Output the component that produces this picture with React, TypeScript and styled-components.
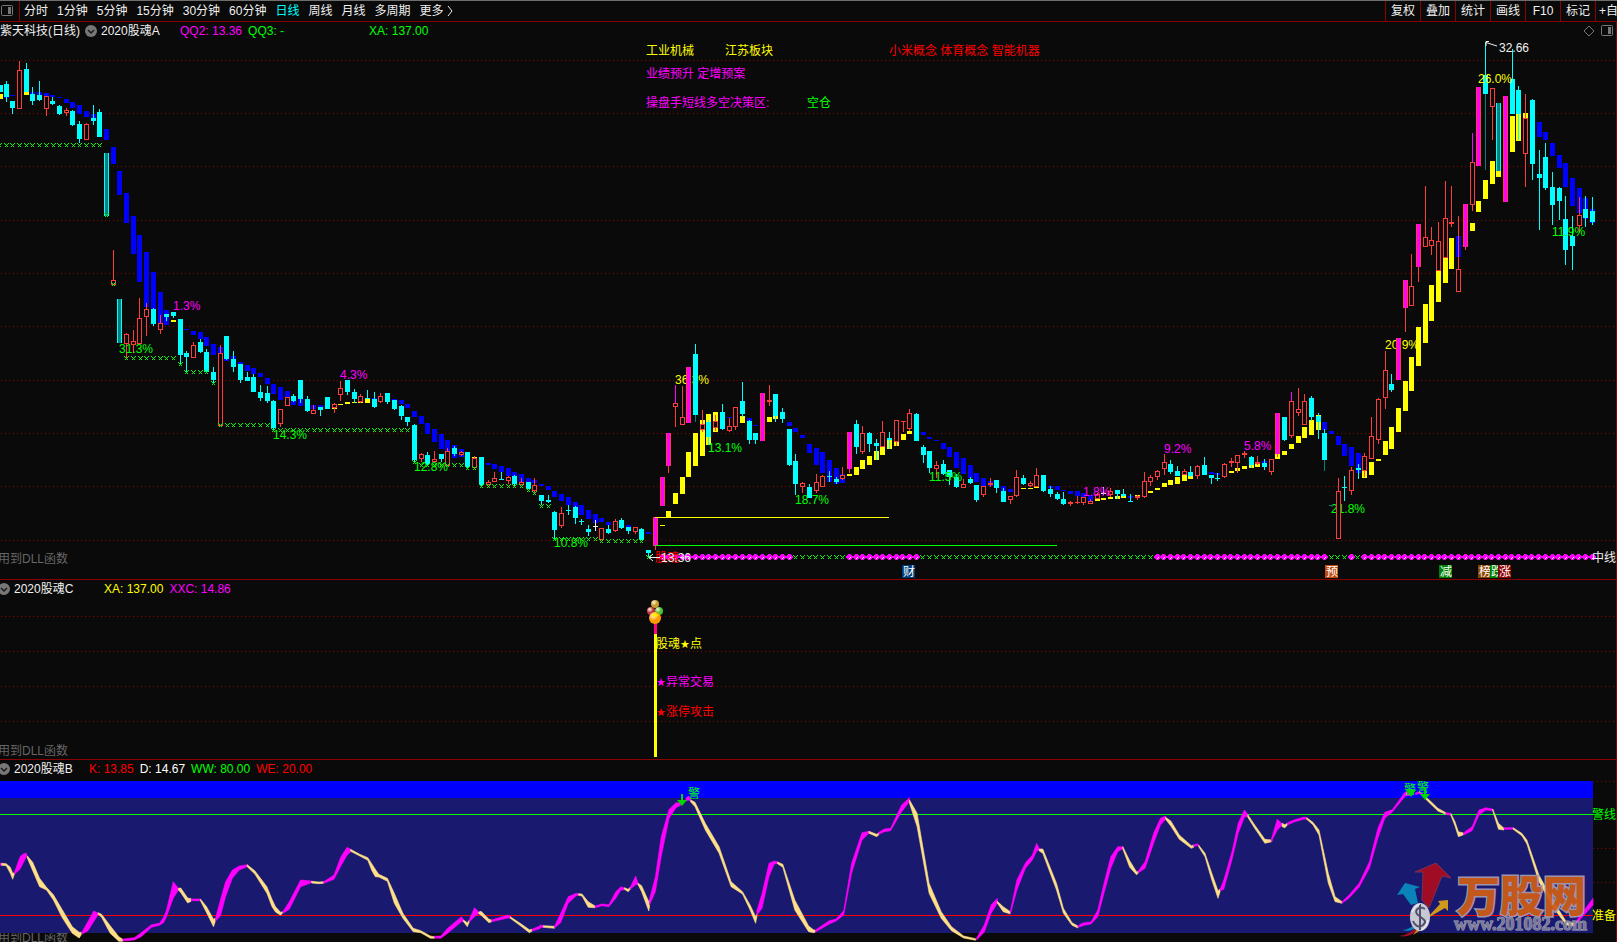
import React from "react";
import styled, { createGlobalStyle } from "styled-components";

const BG = "#0a0a0a";
const LINE = "#8b0000";
const RED = "#ff3c3c";
const CYAN = "#00ffff";
const TEAL = "#008080";
const MAGENTA = "#ff00ff";
const YELLOW = "#ffff00";
const GREEN = "#00ff00";
const BLUE = "#0000ff";
const WHITE = "#f0f0f0";
const FONT = '"Liberation Sans", "Noto Sans CJK SC", sans-serif';

const GlobalStyle = createGlobalStyle`
  * { box-sizing: border-box; }
  html { background: ${BG}; }
  body { margin: 0; background: ${BG}; overflow-x: hidden; font: 12px/18px ${FONT}; color: ${WHITE}; }
`;

const Toolbar = styled.nav`
  display: flex;
  justify-content: space-between;
  height: 22px;
  border-top: 1px solid #6e6e6e;
  border-bottom: 1px solid ${LINE};
  overflow: hidden;
  white-space: nowrap;
`;

const Periods = styled.div`
  display: flex;
  align-items: center;
  gap: 9px;
`;

const LayoutButton = styled.button`
  display: flex;
  align-items: center;
  width: 20px;
  height: 20px;
  margin: 0 -5px 0 0;
  padding: 0 0 0 1px;
  border: 0;
  border-right: 1px solid ${LINE};
  background: none;
`;

const PeriodButton = styled.button<{ $active?: boolean }>`
  display: flex;
  align-items: center;
  gap: 2px;
  padding: 0;
  border: 0;
  background: none;
  font: 12px/18px ${FONT};
  color: ${(p) => (p.$active ? CYAN : WHITE)};
`;

const Tools = styled.div`
  display: flex;
`;

const ToolButton = styled.button<{ $cut?: boolean }>`
  width: ${(p) => (p.$cut ? 22 : 35)}px;
  padding: 0 0 0 ${(p) => (p.$cut ? 3 : 0)}px;
  overflow: hidden;
  border: 0;
  border-left: 1px solid ${LINE};
  background: none;
  font: 12px/18px ${FONT};
  color: ${WHITE};
  text-align: ${(p) => (p.$cut ? "left" : "center")};
`;

const Panels = styled.main`
  box-shadow: inset -1px 0 0 ${LINE};
`;

const Panel = styled.section<{ $last?: boolean }>`
  border-bottom: ${(p) => (p.$last ? "0" : `1px solid ${LINE}`)};
`;

const PanelHeader = styled.header`
  display: flex;
  align-items: center;
  height: 18px;
  overflow: hidden;
  white-space: nowrap;
`;

const Title = styled.h2<{ $width?: number }>`
  min-width: ${(p) => p.$width ?? 0}px;
  margin: 0;
  font: inherit;
`;

const CollapseButton = styled.button`
  display: flex;
  margin: 0 4px 0 -2px;
  padding: 0;
  border: 0;
  background: none;
`;

const StockCollapse = styled(CollapseButton)`
  margin: 0 4px 0 5px;
`;

const Value = styled.span<{ $color: string; $gap?: number }>`
  margin-right: ${(p) => p.$gap ?? 6}px;
  color: ${(p) => p.$color};
`;

const HeaderIcons = styled.div`
  display: flex;
  align-items: center;
  gap: 6px;
  margin: 0 4px 0 auto;
`;

const Chart = styled.svg`
  display: block;
  width: 100%;
  height: auto;
  font: 12px ${FONT};
`;

/* Series are kept in thirds of a pixel, each block counted from its own origin. */
type Block = { ox: number; oy: number; candles: string; bands: string };

/* candles: x kind high top bottom low
   kinds: c falling, r rising, m limit-up, t limit-down, w flat,
          p rising with magenta upper wick, d falling with dark lower wick */
const BLOCKS: Block[] = [
  {
    ox: 0, oy: 0,
    candles: `0 c 255 255 276 276;19 c 243 252 291 306;37 c 303 303 324 342;58 r 183 210 327 327;79 c 189 207 276 276;97 c 261 282 303 315;118 c 243 285 300 303;139 r 288 288 327 348;157 c 291 303 312 315;178 c 315 318 342 345;199 r 324 330 339 348;217 c 330 333 375 378;238 c 363 372 417 429;259 r 369 372 420 420;280 c 315 354 363 375;298 c 327 336 411 411;319 t 459 459 648 648;340 r 750 840 855 855`,
    bands: `0 y 282 297;19 b 291 294;37 b 285 288;79 y 276 285;97 b 276 282;118 b 276 285;139 b 279 288;157 b 285 291;178 b 291 294;199 b 297 309;217 b 306 324;238 b 315 342;259 b 333 351;280 b 342 354;319 b 387 420;340 b 441 492;358 b 513 585;379 b 579 669;400 b 648 762;418 b 705 846;439 b 756 921;460 b 816 930;481 b 876 970`,
  },
  {
    ox: 0, oy: 280,
    candles: `358 t 57 57 189 189;379 r 159 162 192 234;400 r 150 183 195 219;418 r 54 114 192 192;439 r 69 87 111 168;460 c 84 87 132 138;481 r 105 129 150 162;499 c 102 102 111 123;520 c 96 96 108 114;541 c 117 117 225 252;559 c 213 219 231 276;580 r 186 195 234 234;601 c 177 186 216 219;619 c 207 216 276 279;640 c 261 276 300 309;661 r 195 219 438 438;679 c 168 168 237 240;700 c 213 237 261 276;721 c 252 252 300 309;742 c 276 291 303 303;760 c 282 291 336 336;781 c 315 336 354 363;802 c 318 339 363 369;820 c 360 363 444 450;841 r 387 387 432 441;862 r 351 351 378 378;880 c 342 348 363 366;901 c 300 300 357 369;922 c 348 357 393 396;940 r 375 390 402 402;961 c 381 381 390 408;982 c 351 351 387 387;1003 r 369 372 384 399;1021 r 303 324 345 363;1042 c 300 300 336 345;1063 c 327 336 357 369;1081 r 342 348 366 369;1102 c 330 354 357 357;1123 c 336 357 381 384;1141 r 339 348 366 369;1162 c 339 339 366 372;1183 c 360 360 387 390;1204 c 375 378 408 420;1222 c 411 411 426 438;1243 c 432 435 540 546`,
    bands: `499 b 90 135;520 y 120 126;559 b 147 150;580 b 153 165;601 b 156 177;619 b 171 198;640 b 192 225;661 b 201 219;679 b 237 243;700 b 228 237;721 b 246 252;742 b 255 273;760 b 264 282;781 b 279 291;802 b 294 312;820 b 312 342;841 b 321 360;862 b 333 351;880 b 363 375;901 b 357 378;940 b 375 387;961 b 375 381;1003 y 384 387;1021 y 372 375;1042 y 366 372;1063 y 366 369;1081 y 366 369;1102 y 357 369;1123 b 354 357;1183 b 357 360;1204 b 360 372;1222 b 372 384;1243 b 393 411`,
  },
  {
    ox: 330, oy: 340,
    candles: `274 r 339 342 357 366;292 c 336 345 372 378;313 r 333 357 366 366;334 c 342 342 357 366;352 r 324 333 378 378;373 c 318 324 342 348;394 r 333 336 345 348;412 c 336 336 381 384;433 r 348 354 384 384;454 c 351 351 435 438;475 r 420 426 435 435;493 r 396 414 426 426;514 c 396 417 420 420;535 r 408 411 423 432;553 c 405 408 432 438;574 r 414 426 435 435;595 c 426 426 447 447;613 r 414 435 453 459;634 c 465 465 483 495;655 c 465 480 486 489;673 c 513 516 570 597;694 r 501 519 558 564;715 c 495 510 513 525;736 c 498 501 534 552;754 c 537 543 546 555;775 c 555 567 576 588;796 w 540 558 561 573;814 r 564 564 600 600;835 c 555 567 579 582;856 r 537 543 573 576;874 c 534 540 564 567;895 c 561 561 573 582;916 r 561 561 576 582;934 c 564 567 600 600;955 c 630 630 639 651;976 m 531 531 618 630`,
    bands: `274 b 228 252;292 b 249 282;313 b 267 306;334 b 282 327;352 b 300 333;373 b 315 354;394 b 327 351;433 y 351 354;475 b 369 375;493 b 372 387;514 b 378 396;535 b 384 408;553 b 396 408;574 b 402 426;595 b 414 426;613 b 420 429;634 b 432 438;655 b 438 450;673 b 453 471;694 b 462 483;715 b 471 495;736 b 486 501;754 b 495 525;775 b 510 537;796 b 522 549;814 b 534 546;835 b 546 555;895 b 555 561;955 b 576 582;997 y 555 558;1015 y 513 531;1036 y 459 492;1057 y 411 462;1075 y 336 411;1096 y 279 378;1117 y 240 348;1135 y 222 315;1156 y 216 276`,
  },
  {
    ox: 620, oy: 320,
    candles: `127 m 471 471 558 558;145 m 339 339 438 459;166 p 195 249 261 321;187 r 198 291 315 315;205 m 141 141 309 309;226 d 72 102 285 305;247 r 270 312 330 336;265 c 300 306 351 375;286 r 285 303 324 333;307 c 252 276 327 330;328 r 294 318 333 336;346 r 261 261 321 330;367 c 186 243 282 291;388 c 300 303 360 372;406 c 339 339 360 372;427 m 219 219 363 363;448 r 195 240 246 258;466 c 222 222 288 306;487 c 264 276 297 309;508 c 327 327 435 438;526 c 402 423 492 525;547 r 486 489 501 519;568 c 492 501 534 534;589 r 462 486 513 519;607 r 465 468 501 501;628 c 453 468 471 486;649 c 471 477 486 492;667 r 441 465 477 480;688 m 336 336 447 459;709 c 300 312 381 402;727 r 318 339 396 402;748 c 336 339 372 396;769 c 357 369 378 420;787 r 303 336 381 381;808 c 336 354 360 387;829 r 300 300 366 378;850 r 303 303 306 336;868 r 267 279 327 333;889 c 279 282 363 363;910 c 375 381 405 429;928 c 393 393 444 459;949 r 423 435 447 474;970 c 420 432 462 465;988 c 450 450 471 495;1009 c 462 471 501 504;1030 r 477 492 504 504;1051 c 471 477 489 492;1069 c 495 495 540 546;1090 r 498 498 525 531;1111 r 474 489 495 501;1129 c 480 480 504 519;1150 c 504 513 546 546`,
    bands: `328 b 291 294;367 y 288 309;388 b 294 303;406 b 315 318;448 y 291 306;466 y 288 297;508 b 306 318;526 b 324 336;547 b 345 354;568 b 372 399;589 b 384 435;607 b 396 459;628 b 420 486;649 b 444 492;667 b 462 489;688 y 462 468;709 y 441 465;727 y 420 447;748 y 408 435;769 y 393 420;787 y 381 405;808 y 360 387;829 y 366 378;850 y 342 360;868 y 333 342;910 b 336 345;928 b 351 357;949 b 360 363;970 b 369 387;988 b 381 411;1009 b 396 444;1030 b 414 462;1051 b 435 474;1069 b 459 486;1090 b 474 498;1111 b 483 498;1150 b 498 513`,
  },
  {
    ox: 1000, oy: 320,
    candles: `31 r 528 528 540 552;49 r 450 471 528 531;70 c 465 474 492 495;91 r 483 489 498 501;109 r 444 465 501 501;130 c 465 465 513 516;151 c 498 507 522 531;172 c 516 522 537 540;190 c 516 537 552 555;211 r 543 546 552 558;232 r 528 546 549 552;250 r 531 531 549 555;271 r 537 543 552 552;292 r 519 522 537 537;310 w 501 519 522 525;331 r 504 513 525 531;352 c 510 510 522 537;370 c 507 522 528 531;391 c 522 543 546 546;412 r 525 528 534 540;433 r 456 483 531 534;451 r 465 471 486 498;472 r 450 453 471 480;493 r 402 426 447 465;511 c 420 432 456 462;532 c 438 453 468 468;553 r 447 453 465 465;571 c 438 456 468 471;592 r 435 438 468 477;613 c 411 435 465 465;634 c 465 465 474 492;652 c 459 474 477 483;673 r 429 432 471 474;694 r 414 423 429 441;712 r 405 405 429 459;733 r 393 399 405 414;754 c 408 411 435 444;772 r 408 426 432 435;793 c 417 429 441 450;814 r 417 417 456 465;832 m 279 279 402 411;853 c 291 291 360 363;874 p 216 243 348 354;895 r 204 267 279 288;913 r 222 243 315 315;934 c 228 234 291 303;955 c 279 288 306 357;973 d 327 339 420 453;1015 r 474 513 657 657;1033 c 468 501 504 543;1054 r 441 450 513 525;1075 c 432 444 450 477;1093 r 399 408 453 471;1114 r 291 348 417 417;1135 r 234 237 360 372;1156 r 93 150 234 267;1174 c 162 192 210 216;1195 m 54 54 180 180`,
    bands: `31 b 507 516;70 y 504 507;91 y 504 507;109 y 501 504;151 b 498 504;172 b 498 510;190 b 510 513;211 b 513 522;232 b 513 528;250 b 519 531;271 b 525 543;292 y 537 543;310 y 534 540;331 y 531 537;352 y 528 537;370 y 525 534;391 b 528 534;412 y 525 528;451 y 513 519;472 y 504 510;493 y 489 501;511 y 480 495;532 y 471 492;553 y 465 483;571 y 459 477;634 b 456 462;652 b 459 465;694 y 453 459;712 y 444 453;733 y 438 447;754 y 435 444;772 y 429 441;793 b 423 429;832 y 402 417;853 y 393 405;874 y 372 387;895 y 348 369;913 y 321 354;934 y 300 345;955 y 285 330;973 b 306 330;994 b 333 342;1015 b 348 375;1033 b 372 408;1054 b 381 438;1075 b 399 459;1093 y 453 474;1114 y 426 465;1135 y 417 423;1156 y 363 405;1174 y 321 387;1195 y 264 336;1216 y 183 273;1234 y 111 213`,
  },
  {
    ox: 1260, oy: 0,
    candles: `436 m 840 840 924 996;454 r 762 858 918 918;475 m 672 672 801 846;496 r 558 711 741 741;514 r 681 720 738 765;535 r 666 723 813 813;556 r 543 654 774 774;574 r 558 666 672 681;595 r 648 807 876 876;616 m 612 612 741 750;637 p 399 486 615 633;655 m 261 261 498 498;676 d 126 225 282 510;697 r 264 264 321 420;715 t 309 309 513 513;736 m 288 288 606 606;757 c 147 237 342 342;775 c 258 270 342 420;796 r 282 354 462 561;817 c 297 300 492 540;838 c 450 522 534 690;856 c 429 471 564 570;877 c 516 561 615 675;898 c 561 564 603 660;916 c 588 657 750 795;937 c 648 708 738 810;958 r 591 645 678 696;976 c 588 627 654 681;997 c 591 633 666 675`,
    bands: `475 y 981 1098;496 y 912 1029;514 y 855 963;535 y 813 906;556 y 774 849;574 y 714 807;595 b 708 771;637 y 669 693;655 y 603 636;676 y 540 597;697 y 483 552;715 y 510 531;757 y 348 456;775 y 342 423;796 y 339 354;838 b 366 411;856 b 396 420;877 b 429 468;898 b 465 504;916 b 489 561;937 b 534 618;958 b 564 639;976 b 594 657;997 b 627 669`,
  },
];

/* Trading-day column number to pixel column. */
const slot = (i: number) => Math.round(-1 + i * 6.692);
const range = (a: number, b: number) => Array.from({ length: b - a + 1 }, (_, k) => a + k);

/* Support marks: first column, last column, height */
const SUPPORT: [number, number, number][] = [
  [0, 15, 145], [16, 16, 215], [17, 17, 284], [19, 26, 358], [27, 27, 364], [28, 31, 372], [32, 32, 383],
  [33, 40, 425], [41, 61, 430], [62, 62, 462], [63, 69, 465], [70, 71, 468], [72, 78, 486], [79, 79, 490],
  [80, 80, 493], [81, 82, 506], [83, 89, 539], [90, 96, 541], [97, 97, 557],
  [119, 126, 557], [138, 172, 557], [199, 201, 557], [203, 203, 557],
];
const TREND: [number, number][] = [[99, 118], [127, 137], [173, 198], [202, 202], [204, 238]];

const LABELS_UNDER: [string, number, number, string][] = [
  ["36.3%", 675, 384, YELLOW], ["20.9%", 1385, 349, YELLOW], ["21.8%", 1331, 513, GREEN],
];
const LABELS_OVER: [string, number, number, string][] = [
  ["1.3%", 173, 310, MAGENTA], ["31.3%", 119, 353, GREEN], ["14.3%", 273, 439, GREEN], ["4.3%", 340, 379, MAGENTA],
  ["12.8%", 414, 471, GREEN], ["10.8%", 554, 547, GREEN], ["13.1%", 708, 452, GREEN], ["18.7%", 795, 504, GREEN],
  ["11.5%", 929, 481, GREEN], ["1.8%", 1083, 496, MAGENTA], ["9.2%", 1164, 453, MAGENTA], ["5.8%", 1244, 450, MAGENTA],
  ["26.0%", 1478, 83, YELLOW], ["11.9%", 1552, 236, GREEN], ["32.66", 1499, 52, WHITE],
  ["工业机械", 646, 55, YELLOW], ["江苏板块", 725, 55, YELLOW], ["小米概念 体育概念 智能机器", 889, 55, "#ff0000"],
  ["业绩预升 定增预案", 646, 78, MAGENTA], ["操盘手短线多空决策区:", 646, 107, MAGENTA], ["空仓", 807, 107, GREEN],
  ["股魂", 655, 562, "#ff0000"], ["13.36", 661, 562, WHITE], ["中线", 1592, 562, WHITE],
];

const TAGS: [string, number, string][] = [
  ["财", 902, "#003c78"], ["预", 1325, "#c04a10"], ["减", 1439, "#008000"], ["榜", 1478, "#8b4500"], ["跌", 1490, "#008000"], ["涨", 1498, "#8b0000"],
];

const COLORS: Record<string, string> = { y: YELLOW, b: BLUE };

function Grid({ rows, from = 1 }: { rows: number[]; from?: number }) {
  return (
    <g stroke="#8b0000" strokeDasharray="1 3" shapeRendering="crispEdges">
      {rows.map((y) => <line key={y} x1={from} x2="1616" y1={y + 0.5} y2={y + 0.5} />)}
    </g>
  );
}

function Bands({ block }: { block: Block }) {
  return (
    <>
      {block.bands.split(";").map((row) => {
        const [x, kind, top, bottom] = row.split(" ");
        const t = Math.round(+top / 3);
        return (
          <rect key={row} x={block.ox + Math.floor(+x / 3) - 2} y={block.oy + t} width="5"
            height={Math.round(+bottom / 3) - t} fill={COLORS[kind]} />
        );
      })}
    </>
  );
}

function Candle({ block, row }: { block: Block; row: string }) {
  const parts = row.split(" ");
  const kind = parts[1];
  const cx = block.ox + Math.floor(+parts[0] / 3);
  const [high, top, bottom, low] = parts.slice(2).map((v) => block.oy + Math.round(+v / 3));
  const falling = "ctd".includes(kind);
  const edge = kind === "w" ? WHITE : falling ? CYAN : RED;
  const hollow = "rp".includes(kind) && bottom - top > 2;
  const fill = kind === "m" ? MAGENTA : kind === "t" ? TEAL : hollow ? BG : edge;
  return (
    <g>
      {top > high && <rect x={cx} y={high} width="1" height={top - high} fill={kind === "p" ? MAGENTA : edge} />}
      {low > bottom && <rect x={cx} y={bottom} width="1" height={low - bottom} fill={kind === "d" ? TEAL : edge} />}
      <rect x={cx - 2} y={top} width="5" height={bottom - top} fill={edge} />
      {kind !== "c" && <rect x={cx - 1} y={hollow ? top + 1 : top} width="3"
        height={Math.max(0, bottom - top - (hollow ? 2 : 0))} fill={fill} />}
    </g>
  );
}

function PriceChart() {
  return (
    <Chart viewBox="0 40 1617 539" role="img" aria-label="2020股魂A">
      <Grid rows={[60, 113, 166, 220, 273, 326, 380, 433, 486, 540]} />
      {LABELS_UNDER.map(([t, x, y, c]) => <text key={t} x={x} y={y} fill={c}>{t}</text>)}
      <g shapeRendering="crispEdges">
        {BLOCKS.map((b, i) => <Bands key={i} block={b} />)}
        {BLOCKS.map((b) => b.candles.split(";").map((row) => <Candle key={`${b.ox}-${b.oy}-${row}`} block={b} row={row} />))}
        <rect x="655" y="517" width="234" height="1" fill={YELLOW} />
        <rect x="655" y="545" width="402" height="1" fill={GREEN} />
        <rect x="1329" y="505" width="4" height="1" fill={TEAL} />
        {SUPPORT.map(([a, b, y]) => range(a, b).map((i) => (
          <path key={i} fill={GREEN}
            d={`M${slot(i) - 2} ${y - 2}h1v1h1v1h1v-1h1v-1h1v1h-1v1h-1v1h1v1h-1v-1h-1v1h-1v-1h1v-1h-1v-1h-1z`} />
        )))}
        {TREND.map(([a, b]) => range(a, b).map((i) => (
          <g key={i}>
            <path fill={MAGENTA} d={`M${slot(i) - 1} 554h3v1h1v1h1v2h-1v1h-1v1h-3v-1h-1v-1h-1v-2h1v-1h1z`} />
            <path fill="#ffffff" d={`M${slot(i) + 1} 557h1v1h-1v1h-1v-1h1z`} />
          </g>
        )))}
      </g>
      {LABELS_OVER.map(([t, x, y, c]) => <text key={t} x={x} y={y} fill={c}>{t}</text>)}
      <path d="M649 557.500H660M653 554L649 557.500L653 561M1497 46L1486 42.500M1489 41.500H1486V46" fill="none" stroke={WHITE} />
      {TAGS.map(([t, x, c]) => (
        <g key={t}>
          <rect x={x} y="565" width="13" height="13" fill={c} />
          <text x={x + 1} y="576" fontSize="12" fill="#ffffff">{t}</text>
        </g>
      ))}
      <text x="0" y="563" textAnchor="start" fill="#666666"><tspan x="-2">用到DLL函数</tspan></text>
    </Chart>
  );
}

function SignalChart() {
  return (
    <Chart viewBox="0 598 1617 161" role="img" aria-label="2020股魂C">
      <defs>
        {[["gold", "#c89a30"], ["ruby", "#c03040"], ["lime", "#48c030"], ["amber", "#ff9a00"]].map(([id, c]) => (
          <radialGradient key={id} id={id} cx="0.35" cy="0.3" r="0.75">
            <stop offset="0" stopColor="#fff6e0" />
            <stop offset="0.55" stopColor={c} />
            <stop offset="1" stopColor={c} />
          </radialGradient>
        ))}
      </defs>
      <Grid rows={[616, 651, 686, 721]} />
      <rect x="654" y="620" width="3" height="14" fill="#ff0080" />
      <rect x="654" y="634" width="3" height="123" fill={YELLOW} />
      <circle cx="655" cy="604" r="4" fill="url(#gold)" />
      <circle cx="651" cy="611" r="4" fill="url(#ruby)" />
      <circle cx="659" cy="611" r="4" fill="url(#lime)" />
      <circle cx="655" cy="618" r="6" fill="url(#amber)" />
      <path d="M651 616L653 614H654L655 612L656 614L659 615L656 617Z" fill="#ffee00" />
      <text x="656" y="648" fill={YELLOW}>股魂<tspan fontFamily="DejaVu Sans" fontSize="11">★</tspan>点</text>
      <text x="656" y="686" fill={MAGENTA}><tspan fontFamily="DejaVu Sans" fontSize="11">★</tspan>异常交易</text>
      <text x="656" y="716" fill="#ff0000"><tspan fontFamily="DejaVu Sans" fontSize="11">★</tspan>涨停攻击</text>
      <text x="-2" y="755" fill="#666666">用到DLL函数</text>
    </Chart>
  );
}

/* Oscillator ribbon runs: colour, then "x upper lower" points in block units. */
type Run = [string, string];
const CREAM = "#ffe088";
const RIBBONS: { ox: number; unit: number; runs: Run[] }[] = [
  {
    ox: 0, unit: 2.904,
    runs: [
      [MAGENTA, "0 370 376;7 370 376"],
      [CREAM, "5 370 376;18 371 377;30 382 400;37 400 418;42 398 402"],
      [MAGENTA, "42 397 402;58 350 388;66 343 372;77 339 350"],
      [CREAM, "79 347 353;95 367 392;115 415 440;135 442 450;155 464 480;180 508 532;210 560 580;230 577 594;236 577 584"],
      [MAGENTA, "238 576 582;255 545 573;272 513 545;285 519 524"],
      [CREAM, "285 518 523;295 523 532;320 557 580;345 590 604;357 598 604"],
      [MAGENTA, "357 597 603;390 593 600;410 578 590;440 554 562;463 550 556;475 532 548;483 512 532;503 425 475;518 445 451"],
      [CREAM, "518 445 450;525 444 458;545 474 489;555 476 484"],
      [MAGENTA, "555 477 482;582 477 482"],
      [CREAM, "582 477 482;600 500 518;620 538 560;625 535 545"],
      [MAGENTA, "627 530 542;640 480 528;655 425 470;675 390 415;695 378 390;718 374 380"],
      [CREAM, "718 374 380;740 392 402;775 440 460;790 478 500;800 500 516;815 517 526;820 515 520"],
      [MAGENTA, "822 514 520;840 485 508;873 420 440;905 423 428"],
      [CREAM, "905 424 429;925 426 431;940 425 430"],
      [MAGENTA, "940 425 430;970 405 418;990 350 378;1008 322 345;1018 328 336"],
      [CREAM, "1018 328 334;1045 343 348;1068 353 361;1080 372 392;1090 388 410;1100 403 411;1125 415 424;1145 460 490;1170 520 535;1200 565 575;1222 572 578;1250 588 595;1262 590 595"],
      [MAGENTA, "1262 589 594;1280 588 595;1300 565 580;1340 530 545;1346 539 545"],
      [CREAM, "1346 540 545;1357 548 560;1363 540 545"],
      [MAGENTA, "1363 538 546;1378 503 530;1390 516 521"],
      [CREAM, "1390 516 521;1397 514 526;1420 538 548;1428 540 545"],
      [MAGENTA, "1428 540 545;1475 525 534;1482 529 535"],
      [CREAM, "1482 530 535;1515 553 560;1537 569 578;1545 568 574"],
      [MAGENTA, "1545 568 573;1568 558 566"],
    ],
  },
  {
    ox: 540, unit: 2.904,
    runs: [
      [MAGENTA, "0 555 563;12 557 562"],
      [CREAM, "10 557 562;42 559 565"],
      [MAGENTA, "42 559 564;60 520 548;82 470 490;105 460 467;112 461 466"],
      [CREAM, "112 461 466;122 462 468;140 485 502;160 498 503"],
      [MAGENTA, "160 498 503;180 492 497;200 494 500;220 455 475;235 440 450;245 444 450"],
      [CREAM, "245 443 448;256 448 455;262 442 448"],
      [MAGENTA, "262 442 448;278 408 434;285 430 434"],
      [CREAM, "285 430 434;295 437 455;316 485 513;318 480 500"],
      [MAGENTA, "318 478 495;335 410 455;352 290 350;375 208 235;395 188 203;408 188 196"],
      [MAGENTA, "424 174 182;432 168 180;438 181 186"],
      [CREAM, "438 180 186;450 187 200;480 250 270;520 320 340;555 425 440;588 455 462;610 495 510;626 530 550;630 522 530"],
      [MAGENTA, "630 512 525;645 460 505;665 370 410;680 363 372;690 365 371"],
      [CREAM, "690 366 371;705 373 382;740 480 510;780 558 575;795 570 578;800 570 576"],
      [MAGENTA, "800 570 576;840 542 552;860 537 543;882 512 525;905 370 400;935 278 300;955 274 280"],
      [CREAM, "955 274 280;978 283 290;984 278 284"],
      [MAGENTA, "984 277 283;1000 267 275;1018 265 272;1050 195 215;1073 173 185"],
      [CREAM, "1073 180 190;1095 220 260;1130 430 460;1165 515 535;1195 560 572;1230 588 594;1265 596 601"],
      [MAGENTA, "1268 594 600;1290 555 577;1310 495 520;1328 475 490"],
      [CREAM, "1328 484 489;1345 500 515;1366 515 522"],
      [MAGENTA, "1366 513 522;1385 420 450;1410 368 385;1430 345 360;1442 310 334;1450 325 330"],
      [CREAM, "1450 327 333;1460 327 340;1500 430 450;1520 505 520;1545 548 556;1562 558 564"],
      [MAGENTA, "1562 557 562;1568 555 560"],
    ],
  },
  {
    ox: 1080, unit: 2.92,
    runs: [
      [MAGENTA, "0 553 560;12 548 556;32 546 552;52 510 530;70 430 460;90 350 385;110 320 335;125 320 326"],
      [CREAM, "125 320 327;145 362 382;165 395 404;170 395 400"],
      [MAGENTA, "170 393 399;190 365 385;215 280 310;235 235 255;250 228 238"],
      [CREAM, "250 232 238;265 243 258;290 285 298;325 317 325;332 315 322"],
      [MAGENTA, "332 315 320;343 311 316;347 315 320"],
      [CREAM, "347 316 321;365 340 350;385 400 420;403 452 475;409 447 455"],
      [MAGENTA, "409 447 452;420 420 448;445 330 355;462 250 280;480 210 232;490 223 229"],
      [CREAM, "490 224 232;510 255 265;540 298 310;560 300 305"],
      [MAGENTA, "558 300 306;576 238 270;590 251 256"],
      [CREAM, "590 250 260;598 254 263;606 250 255"],
      [MAGENTA, "606 248 255;625 240 246;655 231 237;662 233 238"],
      [CREAM, "662 233 238;680 247 254;698 270 285;725 400 430;745 470 485;765 485 490"],
      [MAGENTA, "765 485 490;785 466 475;815 430 442;845 365 385;870 265 295;890 217 235;912 209 216;950 155 168;965 161 166"],
      [MAGENTA, "980 158 164;990 155 160;1000 160 168"],
      [CREAM, "1010 172 178;1020 180 188;1045 205 213;1068 218 223"],
      [MAGENTA, "1068 218 223;1083 220 226"],
      [CREAM, "1083 221 226;1095 245 258;1105 275 290;1120 279 284"],
      [MAGENTA, "1120 278 285;1145 260 272;1165 210 225;1185 203 210;1205 207 212"],
      [CREAM, "1205 207 212;1222 250 268;1238 265 270"],
      [MAGENTA, "1238 263 268;1265 263 268"],
      [CREAM, "1265 263 268;1290 280 287;1305 300 312;1340 405 425;1380 480 500;1420 545 555;1445 550 558"],
      [MAGENTA, "1445 548 556;1498 475 495"],
    ],
  },
];

function Ribbon({ ox, unit, run }: { ox: number; unit: number; run: Run }) {
  const pts = run[1].split(";").map((p) => p.split(" ").map(Number));
  const at = (x: number, y: number) => `${(ox + x / unit).toFixed(1)},${(740 + y / 3).toFixed(1)}`;
  const points = [...pts.map((p) => at(p[0], p[1])), ...pts.map((p) => at(p[0], p[2])).reverse()].join(" ");
  return <polygon points={points} fill={run[0]} stroke={run[0]} strokeWidth="0.6" />;
}

function SiteMark() {
  return (
    <g>
      <polygon points="1436,863 1451,878 1442,876 1429,908 1422,900 1423,872 1415,872" fill="#a00c24" stroke="#7a3050" />
      <polygon points="1405,883 1420,887 1415,889 1418,903 1411,905 1403,894 1397,895" fill="#0a84b8" />
      <polygon points="1448,900 1438,901 1440,904 1426,919 1445,908 1448,911" fill="#d0981c" />
      <path d="M1419 924Q1412 934 1399 936Q1410 938 1416 931Z" fill="#a00c24" />
      <path d="M1417 922Q1410 930 1402 930Q1412 933 1419 925Z" fill="#0a84b8" />
      <path d="M1420 925L1413 935L1421 930Z" fill="#d08a1c" />
      <ellipse cx="1420" cy="917" rx="10" ry="14" fill="#c8c8d4" />
      <path d="M1425 909C1419 905 1413 911 1418 915S1428 921 1423 925S1414 924 1413 921M1420 904V930" fill="none" stroke="#50506a" strokeWidth="2" />
      <path d="M1412 912Q1415 905 1420 904M1428 920Q1426 928 1421 930" fill="none" stroke="#ffffff" />
      <text x="1457" y="912" fontSize="43" fontWeight="900" fontFamily="Noto Sans CJK SC" fill="#cc5c18"
        stroke="#a49ab0" strokeWidth="3" paintOrder="stroke" opacity="0.95">万股网</text>
      <text x="1454" y="930" fontSize="18" fontWeight="700" fontFamily="Liberation Serif" fill="#85859c"
        stroke="#b4b4c4" strokeWidth="1" paintOrder="stroke" opacity="0.9">www.201082.com</text>
    </g>
  );
}

function OscillatorChart() {
  return (
    <Chart viewBox="0 778 1617 164" role="img" aria-label="2020股魂B">
      <text x="-2" y="942" fill="#666666">用到DLL函数</text>
      <Grid rows={[781, 848, 882]} from={1593} />
      <g shapeRendering="crispEdges">
        <rect x="0" y="781" width="1593" height="17" fill={BLUE} />
        <rect x="0" y="798" width="1593" height="135" fill="#191970" />
        <rect x="0" y="814" width="1593" height="1" fill={GREEN} />
        <rect x="0" y="915" width="1593" height="1" fill="#ff0000" />
      </g>
      {RIBBONS.map((b) => b.runs.map((run) => <Ribbon key={`${b.ox}-${run[1]}`} ox={b.ox} unit={b.unit} run={run} />))}
      <g fill={GREEN}>
        <text x="688" y="798">警</text>
        <text x="1404" y="794">警</text>
        <text x="1417" y="792">警</text>
        <text x="1592" y="819">警线</text>
      </g>
      <g fill="#00d800">
        <path d="M681 794H683V800H687L682 806L677 800H681Z" />
        <path d="M1406 790H1416L1411 797Z" />
        <path d="M1424 788H1426V794H1430L1425 800L1420 794H1424Z" />
      </g>
      <text x="1592" y="920" fill={YELLOW}>准备</text>
      <SiteMark />
    </Chart>
  );
}

function LayoutIcon() {
  return (
    <svg width="12" height="12" viewBox="0 0 12 12" aria-hidden="true">
      <rect x="0.500" y="0.500" width="11" height="10" rx="1" fill="none" stroke="#777777" />
      <rect x="7" y="2" width="3" height="7" fill="#777777" />
    </svg>
  );
}

function CollapseIcon() {
  return (
    <svg width="12" height="12" viewBox="0 0 12 12" aria-hidden="true">
      <circle cx="6" cy="6" r="6" fill="#777777" />
      <path d="M3 5L6 8L9 5" fill="none" stroke="#1a1a1a" strokeWidth="1.500" />
    </svg>
  );
}

const PERIODS = ["分时", "1分钟", "5分钟", "15分钟", "30分钟", "60分钟", "日线", "周线", "月线", "多周期"];
const TOOLS = ["复权", "叠加", "统计", "画线", "F10", "标记"];

export default function App() {
  return (
    <>
      <GlobalStyle />
      <Toolbar>
        <Periods>
          <LayoutButton type="button" aria-label="布局"><LayoutIcon /></LayoutButton>
          {PERIODS.map((p) => <PeriodButton key={p} type="button" $active={p === "日线"}>{p}</PeriodButton>)}
          <PeriodButton type="button">
            更多
            <svg width="8" height="12" viewBox="0 0 8 12" aria-hidden="true">
              <path d="M2 1L6 6L2 11" fill="none" stroke={WHITE} />
            </svg>
          </PeriodButton>
        </Periods>
        <Tools>
          {TOOLS.map((t) => <ToolButton key={t} type="button">{t}</ToolButton>)}
          <ToolButton type="button" $cut>+自</ToolButton>
        </Tools>
      </Toolbar>
      <Panels>
        <Panel>
          <PanelHeader>
            <Title>紫天科技(日线)</Title>
            <StockCollapse type="button" aria-label="折叠"><CollapseIcon /></StockCollapse>
            <Title $width={79}>2020股魂A</Title>
            <Value $color={MAGENTA}>QQ2: 13.36</Value>
            <Value $color={GREEN} $gap={85}>QQ3: -</Value>
            <Value $color={GREEN}>XA: 137.00</Value>
            <HeaderIcons>
              <svg width="12" height="12" viewBox="0 0 12 12" aria-hidden="true">
                <path d="M6 1L11 6L6 11L1 6Z" fill="none" stroke="#777777" />
              </svg>
              <LayoutIcon />
            </HeaderIcons>
          </PanelHeader>
          <PriceChart />
        </Panel>
        <Panel>
          <PanelHeader>
            <CollapseButton type="button" aria-label="折叠"><CollapseIcon /></CollapseButton>
            <Title $width={90}>2020股魂C</Title>
            <Value $color={YELLOW}>XA: 137.00</Value>
            <Value $color={MAGENTA}>XXC: 14.86</Value>
          </PanelHeader>
          <SignalChart />
        </Panel>
        <Panel $last>
          <PanelHeader>
            <CollapseButton type="button" aria-label="折叠"><CollapseIcon /></CollapseButton>
            <Title $width={75}>2020股魂B</Title>
            <Value $color="#ff0000">K: 13.85</Value>
            <Value $color="#ffffff">D: 14.67</Value>
            <Value $color={GREEN}>WW: 80.00</Value>
            <Value $color="#ff0000">WE: 20.00</Value>
          </PanelHeader>
          <OscillatorChart />
        </Panel>
      </Panels>
    </>
  );
}
